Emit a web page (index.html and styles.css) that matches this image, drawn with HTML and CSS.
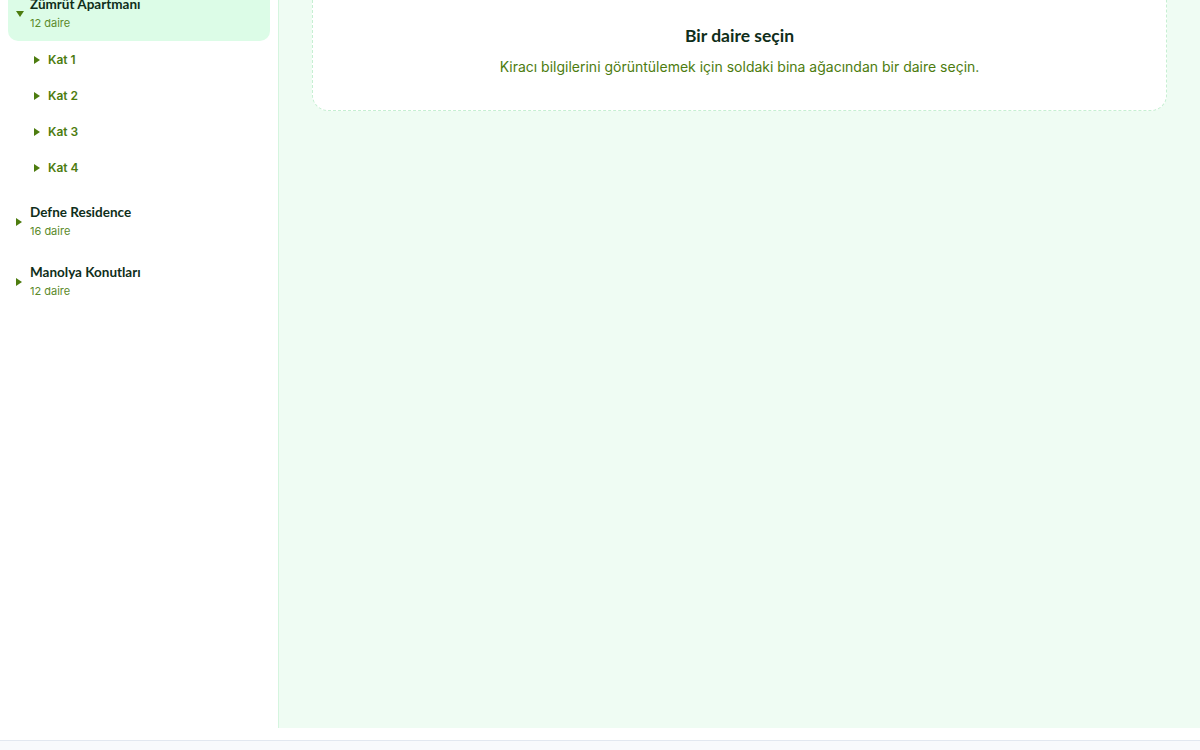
FILE: index.html
```html
<!DOCTYPE html>
<html lang="tr">
<head>
<meta charset="UTF-8" />
<title>Kiracı Yönetimi</title>
<link rel="stylesheet" href="styles.css">
</head>
<body>

<div class="layout">
  <aside class="sidebar">
    <ul class="tree">
      <li class="building open">
        <div class="building-row selected">
          <span class="caret down"></span>
          <div class="building-info">
            <span class="building-name">Zümrüt Apartmanı</span>
            <span class="building-count">12 daire</span>
          </div>
        </div>
        <ul class="floors">
          <li class="floor-row"><span class="caret"></span>Kat 1</li>
          <li class="floor-row"><span class="caret"></span>Kat 2</li>
          <li class="floor-row"><span class="caret"></span>Kat 3</li>
          <li class="floor-row"><span class="caret"></span>Kat 4</li>
        </ul>
      </li>
      <li class="building">
        <div class="building-row">
          <span class="caret"></span>
          <div class="building-info">
            <span class="building-name">Defne Residence</span>
            <span class="building-count">16 daire</span>
          </div>
        </div>
      </li>
      <li class="building">
        <div class="building-row">
          <span class="caret"></span>
          <div class="building-info">
            <span class="building-name">Manolya Konutları</span>
            <span class="building-count">12 daire</span>
          </div>
        </div>
      </li>
    </ul>
  </aside>

  <main class="content">
    <section class="empty-card">
      <h2>Bir daire seçin</h2>
      <p>Kiracı bilgilerini görüntülemek için soldaki bina ağacından bir daire seçin.</p>
    </section>
  </main>
</div>

<footer class="footer"></footer>

</body>
</html>
```

FILE: styles.css
```css
body { margin: 0; font-family: Inter, "Noto Sans", sans-serif; background: #fff; color: #14361f; }
ul { list-style: none; margin: 0; padding: 0; }

.layout { display: flex; height: 728px; padding-bottom: 12px; overflow: hidden; }

.sidebar {
  width: 279px; flex-shrink: 0; background: #fff;
  border-right: 1px solid #d5f5df; padding: 0 8px; box-sizing: border-box;
}
.tree { margin-top: -14px; display: flex; flex-direction: column; gap: 5px; }

.building-row {
  display: flex; align-items: center; gap: 4px;
  padding: 10px 8px; border-radius: 10px; cursor: pointer;
}
.building-row.selected { background: #dcfce7; }
.building-info { display: flex; flex-direction: column; }
.building-name { font-family: Lato, sans-serif; font-weight: 700; font-size: 13.5px; line-height: 17px; color: #0f2e1a; }
.building-count { font-size: 11px; line-height: 16px; margin-top: 2px; color: #5b8a2a; }

.caret { width: 10px; height: 10px; flex-shrink: 0; position: relative; }
.caret::before {
  content: ""; position: absolute; left: 0; top: 1px;
  border-left: 6px solid #4d7c0f; border-top: 4px solid transparent; border-bottom: 4px solid transparent;
}
.caret.down::before {
  top: 2px; border-top: 6px solid #4d7c0f; border-left: 4px solid transparent;
  border-right: 4px solid transparent; border-bottom: 0;
}

.floors { margin-top: 3px; padding-bottom: 5px; display: flex; flex-direction: column; gap: 4px; }
.floor-row {
  display: flex; align-items: center; gap: 4px; margin-left: 18px;
  padding: 8px; font-size: 12px; line-height: 16px; font-weight: 600; color: #4d7c0f; cursor: pointer;
}

.content { flex: 1; background: #effcf3; padding: 0 33px; }
.empty-card {
  margin-top: -29px; background: #fff; border: 1px dashed #c6efd2; border-radius: 16px;
  padding: 52px 24px 32px; text-align: center;
}
.empty-card h2 { margin: 0; font-family: Lato, sans-serif; font-size: 17.5px; line-height: 24px; font-weight: 700; color: #0f2e1a; }
.empty-card p { margin: 8px 0 0; font-size: 14px; line-height: 22px; color: #4d7c0f; }

.footer { height: 10px; background: #f8fafc; border-top: 1px solid #e2e8f0; }
```
